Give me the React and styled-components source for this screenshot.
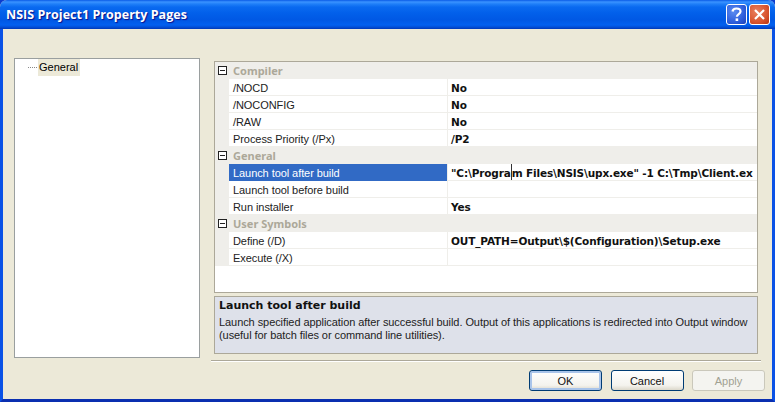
import React from 'react'
import styled, { createGlobalStyle } from 'styled-components'

const GlobalStyle = createGlobalStyle`
  html, body { margin: 0; padding: 0; background: #0a3ccf; }
  body { font-family: "Liberation Sans", "Noto Sans", sans-serif; font-size: 11px; }
`

const Window = styled.div`
  width: 775px;
  height: 402px;
  display: flex;
  flex-direction: column;
  overflow: hidden;
  background: #ece9d8;
  border-radius: 7px 7px 0 0;
`

const TitleBar = styled.div`
  height: 29px;
  flex: none;
  display: flex;
  align-items: center;
  justify-content: space-between;
  padding: 0 5px 1px 6px;
  box-sizing: border-box;
  background: linear-gradient(
    to bottom,
    #0a5be6 0,
    #3a93ff 2px,
    #1f7ff8 4px,
    #0a6af0 7px,
    #0260ea 13px,
    #0058e4 20px,
    #0260f0 25px,
    #0350d8 27px,
    #0038b8 29px
  );
`

const Title = styled.div`
  color: #fff;
  font-family: "Open Sans", sans-serif;
  font-weight: 700;
  font-size: 12.5px;
  letter-spacing: 0.03px;
  text-shadow: 1px 1px 1px #0f1089;
`

const Caption = styled.div`
  display: flex;
  gap: 2px;
`

const CaptionButton = styled.div`
  width: 21px;
  height: 21px;
  border: 1px solid #fff;
  border-radius: 3px;
  box-sizing: border-box;
  display: flex;
  align-items: center;
  justify-content: center;
  background: ${p => p.$close
    ? 'radial-gradient(circle at 35% 35%, #e9805f, #d9552f 60%, #b8330f)'
    : 'radial-gradient(circle at 35% 35%, #5c8cf0, #2f5fdc 60%, #1b3fb8)'};
`

const Frame = styled.div`
  flex: 1;
  min-height: 0;
  display: flex;
  flex-direction: column;
  border-style: solid;
  border-color: #0a52e6;
  border-width: 0 3px 3px 3px;
  border-bottom-color: #0a2fb0;
  background: #ece9d8;
`

const Content = styled.div`
  flex: 1;
  min-height: 0;
  display: flex;
  padding: 29px 8px 0 11px;
`

const TreePanel = styled.div`
  width: 186px;
  height: 300px;
  flex: none;
  box-sizing: border-box;
  border: 1px solid #9a9f9f;
  background: #fff;
`

const TreeItem = styled.div`
  display: flex;
  align-items: center;
  height: 17px;
  padding-left: 13px;
`

const TreeDots = styled.span`
  width: 9px;
  margin-right: 1px;
  border-top: 1px dotted #888;
`

const TreeLabel = styled.span`
  background: #ece9d8;
  padding: 0 2px 0 1px;
  color: #000;
  line-height: 17px;
`

const RightColumn = styled.div`
  margin-left: 11px;
  width: 550px;
  flex: none;
  padding: 3px 3px 0 3px;
  box-sizing: border-box;
`

const GridPanel = styled.div`
  height: 232px;
  box-sizing: border-box;
  border: 1px solid #aca899;
  background: #fff;
  overflow: hidden;
`

const GroupRow = styled.div`
  display: flex;
  align-items: center;
  height: 17px;
  background: #efeeea;
  color: #aca899;
  font-weight: 700;
  font-family: "Noto Sans", sans-serif;
`

const Expander = styled.span`
  flex: none;
  width: 9px;
  height: 9px;
  margin: 0 6px 0 3px;
  border: 1px solid #222;
  box-sizing: border-box;
  position: relative;
  background: #fff;
  &::after {
    content: '';
    position: absolute;
    left: 1px;
    right: 1px;
    top: 3px;
    height: 1px;
    background: #222;
  }
`

const PropRow = styled.div`
  display: flex;
  height: 17px;
  background: #efeeea;
`

const NameCell = styled.div`
  width: 218px;
  margin-left: 14px;
  flex: none;
  padding-left: 4px;
  box-sizing: border-box;
  line-height: 18px;
  letter-spacing: -0.07px;
  overflow: hidden;
  white-space: nowrap;
  color: ${p => (p.$selected ? '#fff' : '#222')};
  background: ${p => (p.$selected ? '#316ac5' : '#fff')};
  border-bottom: 1px solid ${p => (p.$selected ? '#316ac5' : '#efeeea')};
`

const ValueCell = styled.div`
  flex: 1;
  min-width: 0;
  padding-left: 3px;
  overflow: hidden;
  box-sizing: border-box;
  line-height: 18px;
  white-space: nowrap;
  font-family: "DejaVu Sans", sans-serif;
  font-weight: 700;
  font-size: 10.5px;
  letter-spacing: -0.14px;
  color: #111;
  background: #fff;
  border-left: 1px solid #efeeea;
  border-bottom: 1px solid #efeeea;
`

const Caret = styled.span`
  display: inline-block;
  width: 0;
  height: 16px;
  vertical-align: top;
  border-left: 1px solid #333;
`

const Description = styled.div`
  margin-top: 3px;
  height: 58px;
  box-sizing: border-box;
  border: 1px solid #aca899;
  background: #dee1ea;
  padding: 1px 4px;
  color: #222;
`

const DescTitle = styled.div`
  font-family: "DejaVu Sans", sans-serif;
  font-weight: 700;
  font-size: 11px;
  line-height: 16px;
  color: #111;
`

const DescText = styled.div`
  line-height: 13px;
  margin-top: 2px;
  letter-spacing: -0.07px;
  white-space: nowrap;
`

const Divider = styled.div`
  flex: none;
  height: 2px;
  margin: 0 11px 0 208px;
  background: linear-gradient(to bottom, #aca899 1px, #fff 1px);
`

const ButtonRow = styled.div`
  flex: none;
  height: 37px;
  display: flex;
  justify-content: flex-end;
  gap: 8.5px;
  padding: 8px 7px 0 0;
  box-sizing: border-box;
`

const Button = styled.div`
  width: 73px;
  height: 21px;
  box-sizing: border-box;
  border: 1px solid ${p => (p.$disabled ? '#cac8bb' : '#003c74')};
  border-radius: 3px;
  display: flex;
  align-items: center;
  justify-content: center;
  color: ${p => (p.$disabled ? '#a1a192' : '#111')};
  background: ${p => (p.$disabled ? '#f4f4f0' : 'linear-gradient(to bottom, #fff, #f4f3ee 75%, #dcd8cb)')};
  box-shadow: ${p => (p.$default ? 'inset 0 0 0 2px #a9c4ea' : 'none')};
`

const compilerRows = [
  { name: '/NOCD', value: 'No' },
  { name: '/NOCONFIG', value: 'No' },
  { name: '/RAW', value: 'No' },
  { name: 'Process Priority (/Px)', value: '/P2' },
]

const generalRows = [
  {
    name: 'Launch tool after build',
    selected: true,
    value: (
      <>
        "C:\Progra<Caret />m Files\NSIS\upx.exe" -1 C:\Tmp\Client.ex
      </>
    ),
  },
  { name: 'Launch tool before build', value: '' },
  { name: 'Run installer', value: 'Yes' },
]

const symbolRows = [
  { name: 'Define (/D)', value: 'OUT_PATH=Output\\$(Configuration)\\Setup.exe' },
  { name: 'Execute (/X)', value: '' },
]

const groups = [
  { title: 'Compiler', rows: compilerRows },
  { title: 'General', rows: generalRows },
  { title: 'User Symbols', rows: symbolRows },
]

const App = () => (
  <Window>
    <GlobalStyle />
    <TitleBar>
      <Title>NSIS Project1 Property Pages</Title>
      <Caption>
        <CaptionButton>
          <svg width="13" height="15" viewBox="0 0 13 15">
            <path d="M2.5 4.5C2.8 2.3 4.5 1.5 6.5 1.5c2.2 0 4 1.1 4 3 0 2.6-3.6 2.7-3.6 5.3" fill="none" stroke="#fff" strokeWidth="2.2" />
            <rect x="5.6" y="11.4" width="2.6" height="2.6" fill="#fff" />
          </svg>
        </CaptionButton>
        <CaptionButton $close>
          <svg width="13" height="13" viewBox="0 0 13 13">
            <path d="M2 2l9 9M11 2l-9 9" stroke="#fff" strokeWidth="2.2" />
          </svg>
        </CaptionButton>
      </Caption>
    </TitleBar>
    <Frame>
      <Content>
        <TreePanel>
          <TreeItem>
            <TreeDots />
            <TreeLabel>General</TreeLabel>
          </TreeItem>
        </TreePanel>
        <RightColumn>
          <GridPanel>
            {groups.map(g => (
              <React.Fragment key={g.title}>
                <GroupRow>
                  <Expander />
                  {g.title}
                </GroupRow>
                {g.rows.map(r => (
                  <PropRow key={r.name}>
                    <NameCell $selected={r.selected}>{r.name}</NameCell>
                    <ValueCell>{r.value}</ValueCell>
                  </PropRow>
                ))}
              </React.Fragment>
            ))}
          </GridPanel>
          <Description>
            <DescTitle>Launch tool after build</DescTitle>
            <DescText>
              Launch specified application after successful build. Output of this applications is redirected into Output window
              <br />
              (useful for batch files or command line utilities).
            </DescText>
          </Description>
        </RightColumn>
      </Content>
      <Divider />
      <ButtonRow>
        <Button $default>OK</Button>
        <Button>Cancel</Button>
        <Button $disabled>Apply</Button>
      </ButtonRow>
    </Frame>
  </Window>
)

export default App
